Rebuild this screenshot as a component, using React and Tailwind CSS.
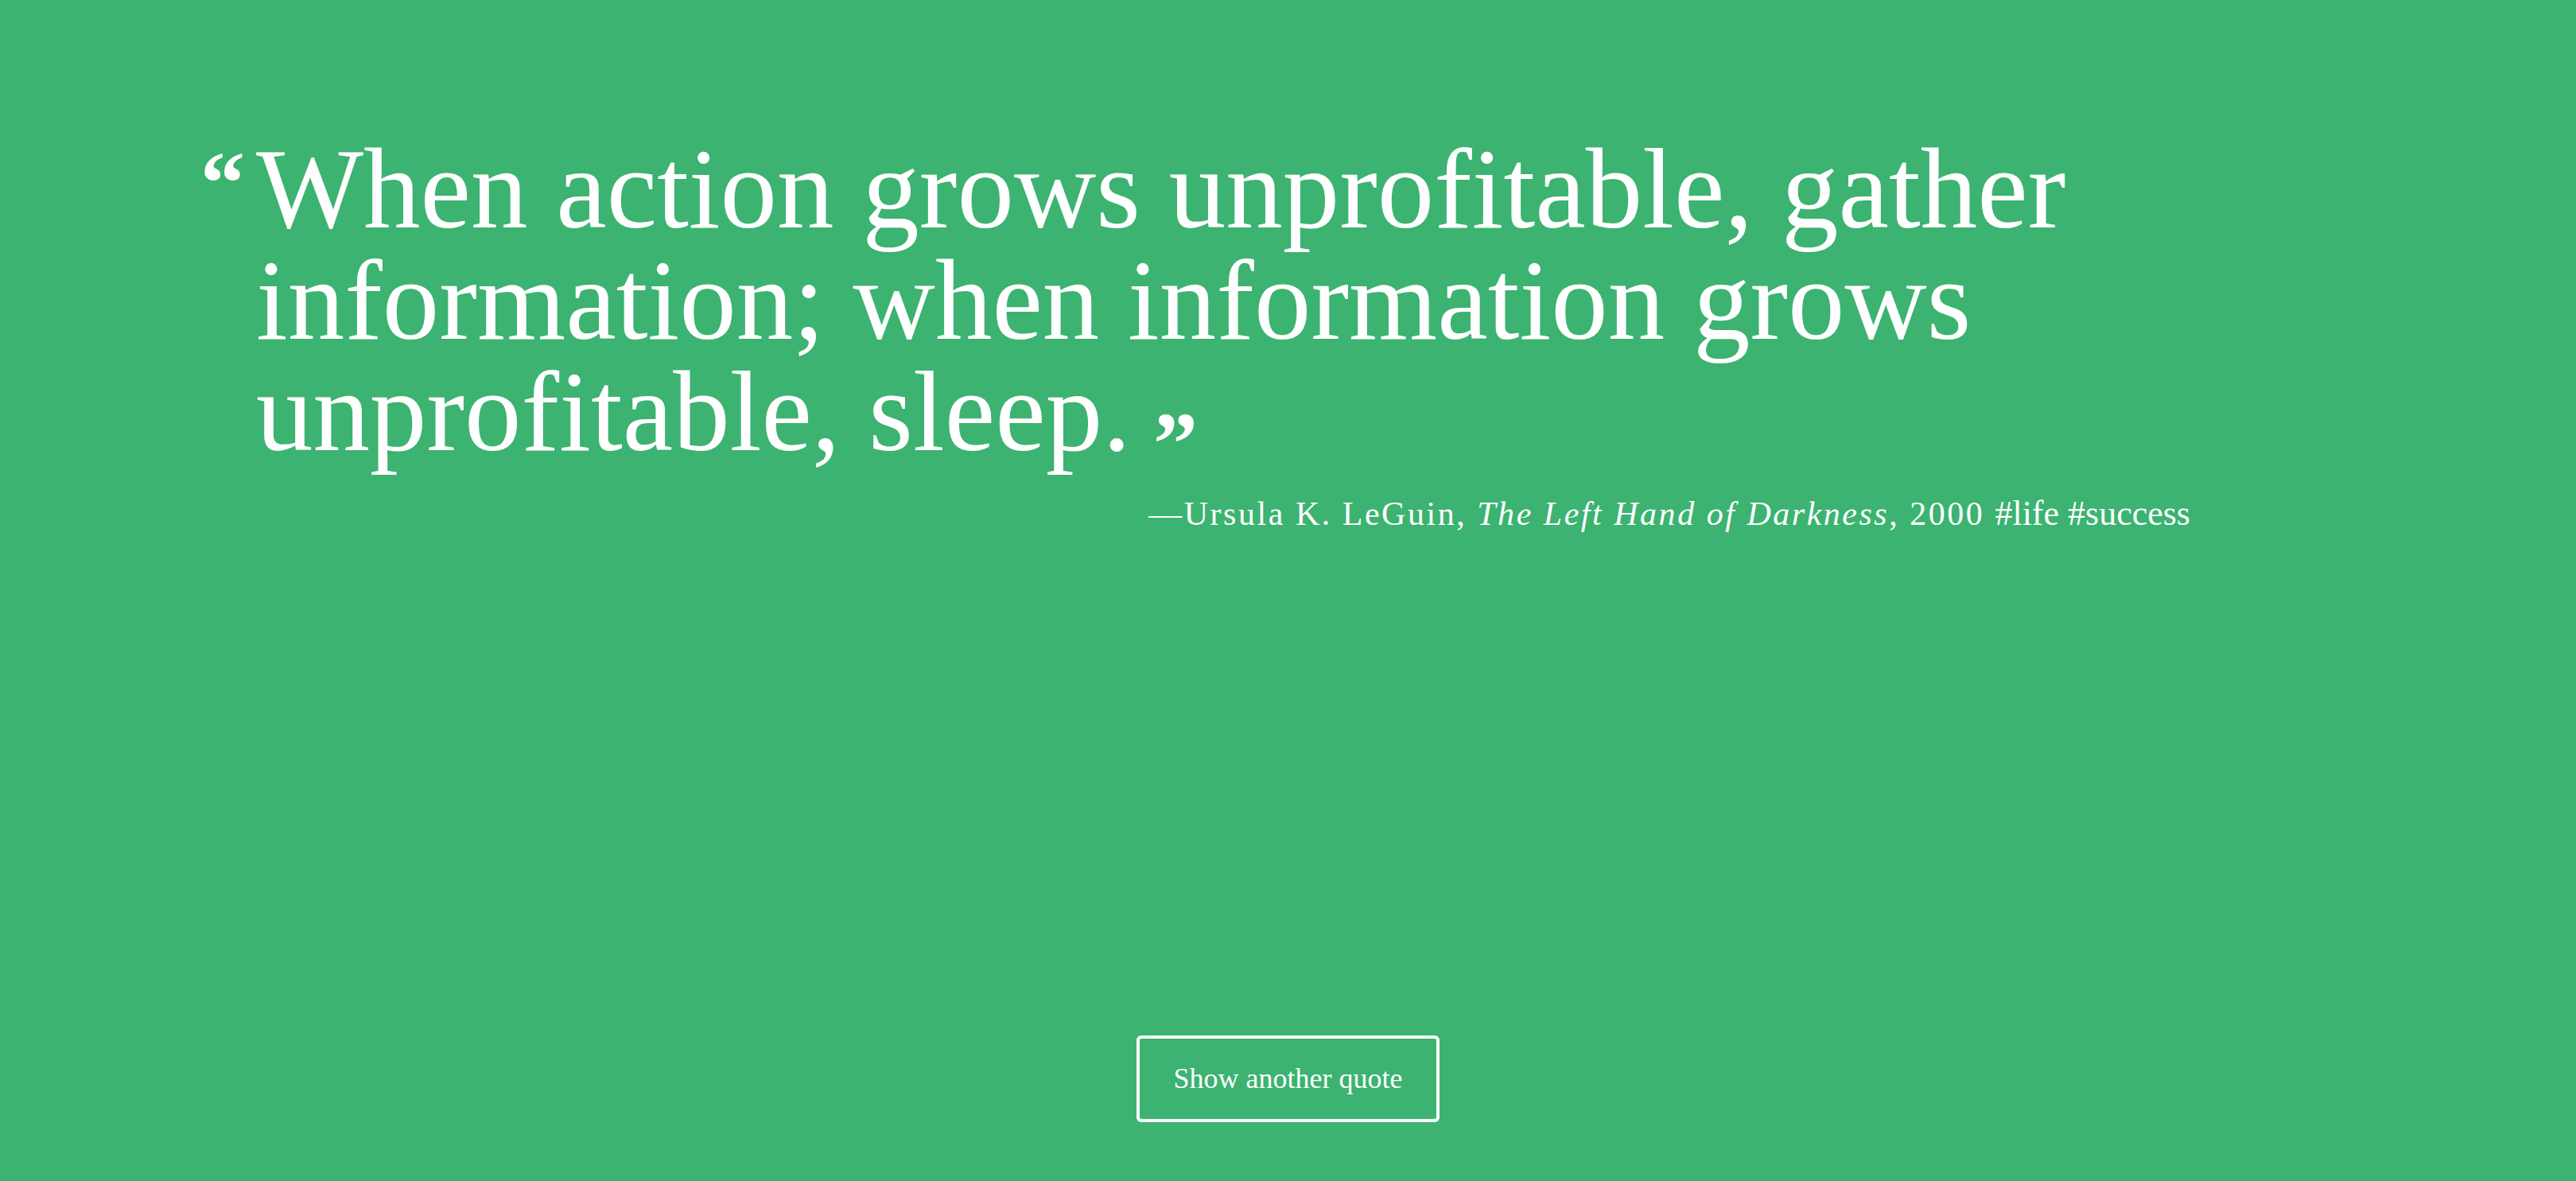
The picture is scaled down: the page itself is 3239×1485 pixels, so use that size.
import { useState } from "react";

const quotes = [
  {
    text: "When action grows unprofitable, gather information; when information grows unprofitable, sleep.",
    author: "Ursula K. LeGuin",
    source: "The Left Hand of Darkness",
    year: "2000",
    tags: ["life", "success"],
  },
];

export default function App() {
  const [idx, setIdx] = useState(0);
  const q = quotes[idx];

  return (
    <div className="h-screen bg-[#3cb371] text-white flex flex-col font-['Liberation_Serif',serif] overflow-hidden">
      <div className="pt-[168px] pl-[252px] pr-[485px]">
        <div className="flex items-start">
          <span className="w-[70px] shrink-0 text-[112px] font-bold leading-none mt-[6px]">“</span>
          <p className="text-[143px] leading-[140px] max-w-[2400px]">
            {q.text}
            <span className="ml-[28px] text-[112px] font-bold leading-[0px] align-[-30px]">”</span>
          </p>
        </div>
        <p className="mt-[29px] text-right text-[42px] leading-[57px] tracking-[0.06em]">
          —{q.author}, <em>{q.source}</em>, {q.year}{" "}
          <span className="tracking-normal text-[44px]">
            {q.tags.map((t) => "#" + t).join(" ")}
          </span>
        </p>
      </div>

      <div className="mt-auto mb-[74px] flex justify-center">
        <button
          onClick={() => setIdx((i) => (i + 1) % quotes.length)}
          className="border-4 border-white rounded-md px-[43px] py-[28px] text-[36px] leading-[45px] text-white"
        >
          Show another quote
        </button>
      </div>
    </div>
  );
}
